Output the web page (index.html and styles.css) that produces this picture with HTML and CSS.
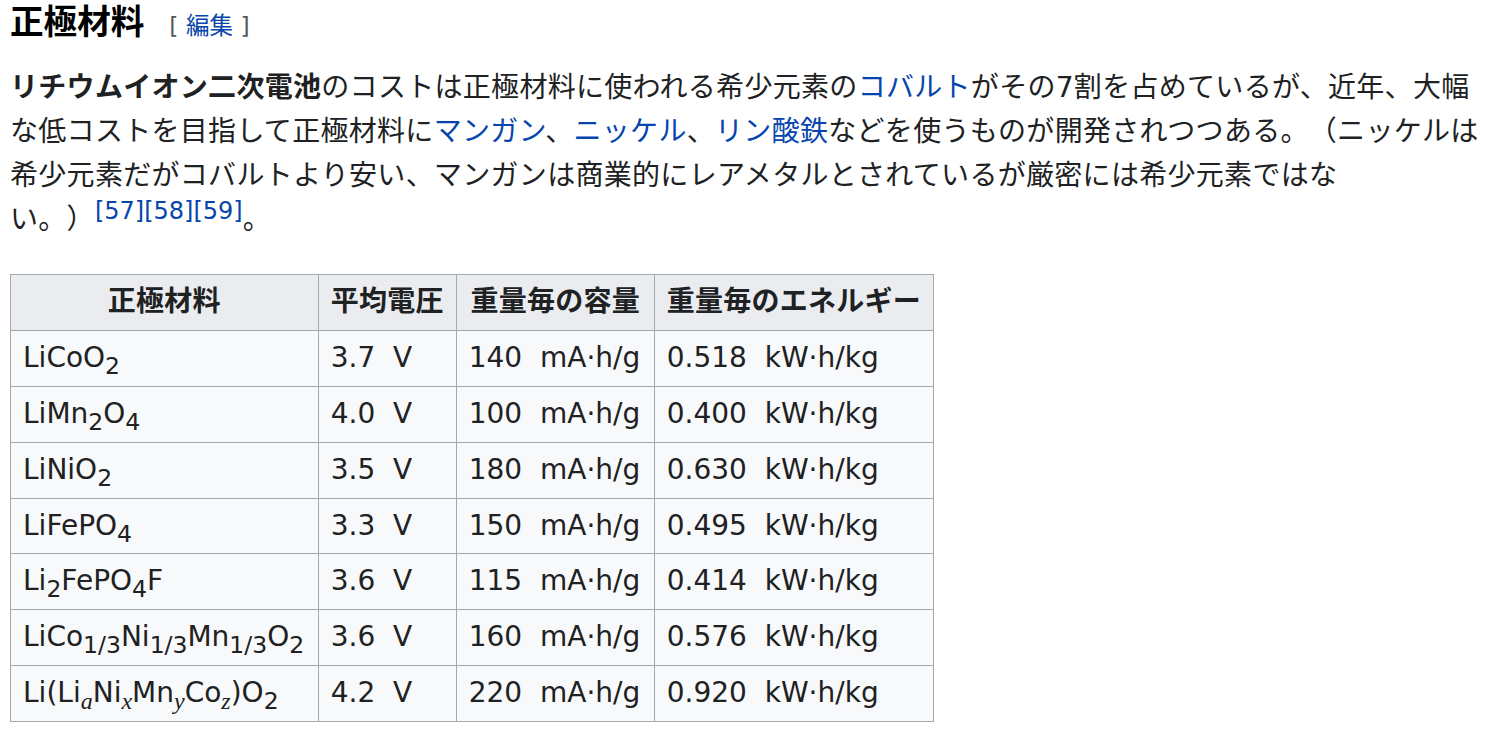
FILE: index.html
```html
<!DOCTYPE html>
<html lang="ja">
<head>
<meta charset="utf-8">
<link rel="stylesheet" href="styles.css">
</head>
<body>
<div class="content">
  <h3 class="section-heading"><span class="headline">正極材料</span><span class="editsection"><span class="bracket">[</span> <a href="#">編集</a> <span class="bracket">]</span></span></h3>
  <p class="para"><b>リチウムイオン二次電池</b>のコストは正極材料に使われる希少元素の<a href="#">コバルト</a>がその7割を占めているが、近年、大幅な低コストを目指して正極材料に<a href="#">マンガン</a>、<a href="#">ニッケル</a>、<a href="#">リン酸鉄</a>などを使うものが開発されつつある。（ニッケルは希少元素だがコバルトより安い、マンガンは商業的にレアメタルとされているが厳密には希少元素ではな<span class="nowrap">い。）<sup class="ref"><a href="#">[57]</a></sup><sup class="ref"><a href="#">[58]</a></sup><sup class="ref"><a href="#">[59]</a></sup>。</span></p>
  <table class="wikitable">
    <thead>
      <tr><th>正極材料</th><th>平均電圧</th><th>重量毎の容量</th><th>重量毎のエネルギー</th></tr>
    </thead>
    <tbody>
      <tr><td>LiCoO<sub>2</sub></td><td>3.7&nbsp; V</td><td>140&nbsp; mA·h/g</td><td>0.518&nbsp; kW·h/kg</td></tr>
      <tr><td>LiMn<sub>2</sub>O<sub>4</sub></td><td>4.0&nbsp; V</td><td>100&nbsp; mA·h/g</td><td>0.400&nbsp; kW·h/kg</td></tr>
      <tr><td>LiNiO<sub>2</sub></td><td>3.5&nbsp; V</td><td>180&nbsp; mA·h/g</td><td>0.630&nbsp; kW·h/kg</td></tr>
      <tr><td>LiFePO<sub>4</sub></td><td>3.3&nbsp; V</td><td>150&nbsp; mA·h/g</td><td>0.495&nbsp; kW·h/kg</td></tr>
      <tr><td>Li<sub>2</sub>FePO<sub>4</sub>F</td><td>3.6&nbsp; V</td><td>115&nbsp; mA·h/g</td><td>0.414&nbsp; kW·h/kg</td></tr>
      <tr><td>LiCo<sub>1/3</sub>Ni<sub>1/3</sub>Mn<sub>1/3</sub>O<sub>2</sub></td><td>3.6&nbsp; V</td><td>160&nbsp; mA·h/g</td><td>0.576&nbsp; kW·h/kg</td></tr>
      <tr><td>Li(Li<sub class="var">a</sub>Ni<sub class="var">x</sub>Mn<sub class="var">y</sub>Co<sub class="var">z</sub>)O<sub>2</sub></td><td>4.2&nbsp; V</td><td>220&nbsp; mA·h/g</td><td>0.920&nbsp; kW·h/kg</td></tr>
    </tbody>
  </table>
</div>
</body>
</html>
```

FILE: styles.css
```css
html, body {
  margin: 0;
  padding: 0;
  background: #ffffff;
}

body {
  font-family: "DejaVu Sans", "Noto Sans CJK JP", sans-serif;
  color: #202122;
  font-size: 28px;
  line-height: 1.6;
  text-spacing-trim: space-all;
}

.content {
  padding: 0 2px 0 10px;
}

a {
  color: #0645ad;
  text-decoration: none;
}

.section-heading {
  margin: 0;
  padding: 0;
  font-size: 33.6px;
  line-height: 1.35;
  font-weight: bold;
  color: #000000;
  display: flex;
  align-items: baseline;
}

.editsection {
  font-size: 23.5px;
  font-weight: normal;
  margin-left: 25px;
  color: #54595d;
}

.para {
  margin: 21px 0 0 0;
  line-height: 44px;
  letter-spacing: 0.3px;
}

.nowrap {
  white-space: nowrap;
}

.ref {
  font-size: 24px;
  line-height: 1;
  vertical-align: super;
  letter-spacing: 0;
}

.wikitable {
  border-collapse: collapse;
  background: #f8f9fa;
  color: #202122;
  border: 1px solid #a2a9b1;
  margin-top: 32px;
}

.wikitable th,
.wikitable td {
  border: 1px solid #a2a9b1;
  line-height: 1.6;
  white-space: nowrap;
}

.wikitable th {
  background: #eaecf0;
  font-weight: bold;
  text-align: center;
  padding: 5px 12px;
  letter-spacing: 0.25px;
}

.wikitable td {
  text-align: left;
  padding: 5px 13.5px 5px 12px;
}

sub {
  font-size: 23.5px;
  line-height: 1;
  vertical-align: -7px;
}

sub.var {
  font-family: "Liberation Serif", serif;
  font-style: italic;
  font-size: 24px;
}
```
